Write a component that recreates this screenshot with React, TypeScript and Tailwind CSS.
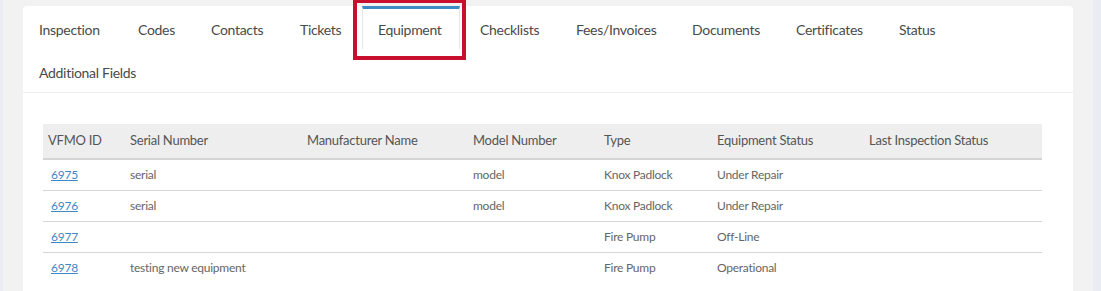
import React from "react";

const tabs = [
  { label: "Inspection", w: "w-[95px]" },
  { label: "Codes", w: "w-[69px]" },
  { label: "Contacts", w: "w-[85px]" },
  { label: "Tickets", w: "w-[74px]" },
  { label: "Equipment", w: "w-[98px]", active: true },
  { label: "Checklists", w: "w-[92px]" },
  { label: "Fees/Invoices", w: "w-[112px]" },
  { label: "Documents", w: "w-[100px]" },
  { label: "Certificates", w: "w-[99px]" },
  { label: "Status", w: "w-[70px]" },
  { label: "Additional Fields", w: "w-[140px]" },
];

const columns = [
  { label: "VFMO ID", w: "w-[82px]" },
  { label: "Serial Number", w: "w-[177px]" },
  { label: "Manufacturer Name", w: "w-[166px]" },
  { label: "Model Number", w: "w-[131px]" },
  { label: "Type", w: "w-[113px]" },
  { label: "Equipment Status", w: "w-[152px]" },
  { label: "Last Inspection Status", w: "" },
];

const rows = [
  ["6975", "serial", "", "model", "Knox Padlock", "Under Repair", ""],
  ["6976", "serial", "", "model", "Knox Padlock", "Under Repair", ""],
  ["6977", "", "", "", "Fire Pump", "Off-Line", ""],
  ["6978", "testing new equipment", "", "", "Fire Pump", "Operational", ""],
];

export default function App() {
  return (
    <div className="flex h-[291px] w-[1101px] overflow-hidden bg-[#f2f2f2] font-['Lato','Liberation_Sans',sans-serif]">
      <div className="w-[3px] shrink-0 bg-[#e9edf3]" />
      <div className="w-[20px] shrink-0" />

      {/* main panel */}
      <div className="mt-[6px] w-[1050px] shrink-0 rounded-t-[4px] bg-white">
        {/* tabs */}
        <ul className="flex flex-wrap border-b border-[#eeeeee]">
          {tabs.map((t) => (
            <li
              key={t.label}
              className={`relative mr-[4px] h-[43px] shrink-0 border-x border-t-[3px] pl-[15px] pt-[11px] text-[14px] leading-[20px] tracking-[-0.3px] text-[#4a4a4a] ${t.w} ${
                t.active ? "border-x-[#e6e6e6] border-t-[#3d8ac4] bg-white" : "border-x-transparent border-t-transparent"
              }`}
            >
              {t.label}
              {t.active && (
                <span className="pointer-events-none absolute -left-[10px] -top-[10px] h-[61px] w-[113px] border-4 border-[#c8102e]" />
              )}
            </li>
          ))}
        </ul>

        {/* equipment table */}
        <div className="ml-[20px] mr-[31px] mt-[31px]">
          <table className="w-full border-collapse text-[13px] tracking-[-0.25px] text-[#555]">
            <thead>
              <tr className="h-[35px] border-b-2 border-[#d4d4d4] bg-[#eeeeee]">
                {columns.map((c) => (
                  <th key={c.label} className={`pl-[5px] text-left font-normal ${c.w}`}>
                    {c.label}
                  </th>
                ))}
              </tr>
            </thead>
            <tbody>
              {rows.map((r) => (
                <tr key={r[0]} className="h-[31px] border-b border-[#d6d6d6] last:border-b-0">
                  {r.map((cell, i) =>
                    i === 0 ? (
                      <td key={i} className="pl-[8px] text-[12px]">
                        <a href="#" className="text-[#3f88c5] underline">
                          {cell}
                        </a>
                      </td>
                    ) : (
                      <td key={i} className="pl-[5px] text-[12px] text-[#666]">
                        {cell}
                      </td>
                    )
                  )}
                </tr>
              ))}
            </tbody>
          </table>
        </div>
      </div>

      <div className="w-[20px] shrink-0" />
      <div className="w-[8px] shrink-0 bg-[#e9edf3]" />
    </div>
  );
}
